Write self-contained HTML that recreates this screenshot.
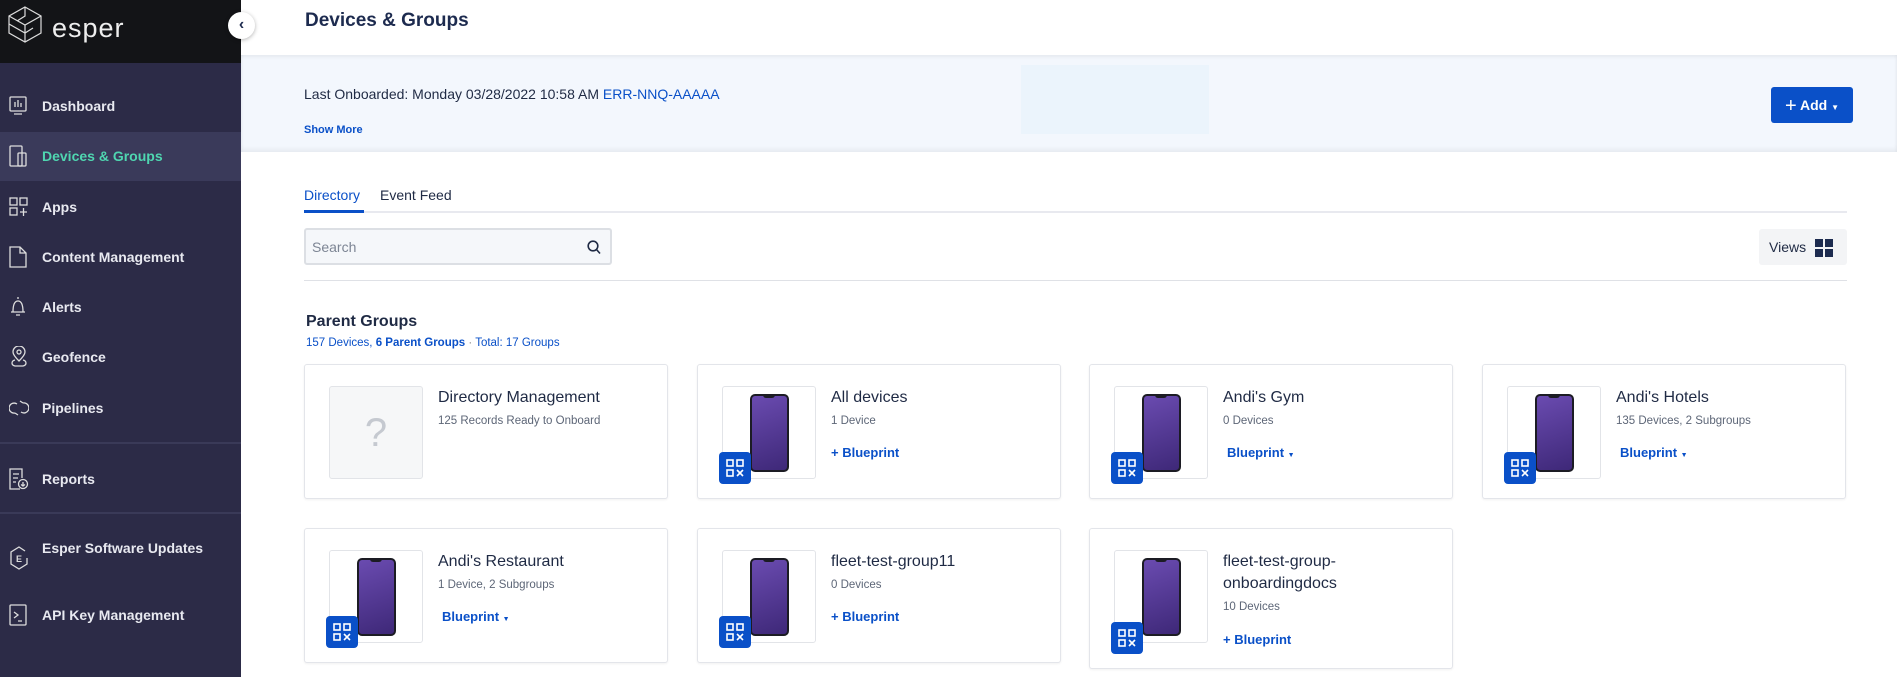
<!DOCTYPE html>
<html><head><meta charset="utf-8"><style>
*{box-sizing:border-box;margin:0;padding:0}
body{width:1897px;height:677px;overflow:hidden;font-family:"Liberation Sans",sans-serif;background:#fff;position:relative;color:#1f2a44}
.sb{position:absolute;left:0;top:0;width:241px;height:677px;background:#2c2b47}
.logo{position:absolute;left:0;top:0;width:241px;height:63px;background:#131417}
.nav{position:absolute;left:0;width:241px;color:#e8e9f0;font-size:14px;font-weight:bold}
.nav span{position:absolute;left:42px;transform:translateY(-50%)}
.nav svg{position:absolute;left:9px;transform:translateY(-50%)}
.abs{position:absolute}
.card{position:absolute;width:364px;height:135px;border:1px solid #e3e5ea;border-radius:3px;background:#fff;box-shadow:0 1px 2px rgba(0,0,0,.06)}
.img{position:absolute;left:24px;top:21px;width:94px;height:93px;border:1px solid #e2e4e8;border-radius:3px;background:#fff}
.phone{position:absolute;left:27px;top:7px;width:39px;height:78px;border-radius:5px;background:linear-gradient(160deg,#6a4bb0,#3e2878);border:2px solid #1c1c24}
.phone:after{content:"";position:absolute;left:11px;top:-1px;width:12px;height:3px;background:#1c1c24;border-radius:0 0 3px 3px}
.qr{position:absolute;left:21px;top:87px;width:32px;height:32px;background:#0a50c8;border-radius:4px}
.t{position:absolute;left:133px;top:22px;font-size:16px;color:#1f2a44;line-height:22px}
.s{position:absolute;left:133px;top:50px;font-size:11.5px;color:#5d6677}
.b{position:absolute;left:133px;top:80px;font-size:13px;font-weight:bold;color:#0a50c8}
</style></head><body>
<div class="sb"></div>
<div class="logo">
<svg class="abs" style="left:8px;top:6px" width="34" height="37" viewBox="0 0 34 37" fill="none" stroke="#ddd" stroke-width="1.2"><path d="M17 1L33 10V27L17 36L1 27V10Z"/><path d="M1 10L17 19L33 10M17 1V10L9 15M17 19V36M1 18L17 27L25 22"/></svg>
<div class="abs" style="left:52px;top:13px;font-size:27px;color:#eee;font-weight:300;letter-spacing:1px">esper</div>
</div>
<div class="abs" style="left:228px;top:12px;width:27px;height:27px;border-radius:50%;background:#fff;box-shadow:0 1px 4px rgba(0,0,0,.3);color:#1d2b4f;font-size:16px;font-weight:bold;text-align:center;line-height:26px">‹</div>

<div class="abs" style="left:0;top:132px;width:241px;height:49px;background:#3a3a5a"></div>
<div class="abs" style="left:0;top:442px;width:241px;height:2px;background:#3a3a58"></div>
<div class="abs" style="left:0;top:512px;width:241px;height:2px;background:#3a3a58"></div>

<div class="nav" style="top:106px"><svg width="18" height="20" viewBox="0 0 18 20" fill="none" stroke="#ddd" stroke-width="1.3"><rect x="1" y="1" width="16" height="14" rx="1"/><path d="M6 11V6M9 11V4M12 11V7M5 18H13"/></svg><span>Dashboard</span></div>
<div class="nav" style="top:156px;color:#4fd6b0"><svg width="18" height="22" viewBox="0 0 18 22" fill="none" stroke="#ddd" stroke-width="1.3"><rect x="1" y="1" width="12" height="20" rx="1"/><rect x="9" y="8" width="8" height="13" rx="1"/></svg><span>Devices &amp; Groups</span></div>
<div class="nav" style="top:207px"><svg width="20" height="20" viewBox="0 0 20 20" fill="none" stroke="#ddd" stroke-width="1.3"><rect x="1" y="1" width="7" height="7"/><rect x="11" y="1" width="7" height="7"/><rect x="1" y="11" width="7" height="7"/><path d="M14.5 11V19M11 15H18"/></svg><span>Apps</span></div>
<div class="nav" style="top:257px"><svg width="18" height="22" viewBox="0 0 18 22" fill="none" stroke="#ddd" stroke-width="1.3"><path d="M1 1H11L17 7V21H1Z M11 1V7H17"/></svg><span>Content Management</span></div>
<div class="nav" style="top:307px"><svg width="18" height="22" viewBox="0 0 18 22" fill="none" stroke="#ddd" stroke-width="1.3"><path d="M9 1V3M4 16C4 10 5 5 9 5C13 5 14 10 14 16H2H16M7 19H11"/></svg><span>Alerts</span></div>
<div class="nav" style="top:357px"><svg width="20" height="22" viewBox="0 0 20 22" fill="none" stroke="#ddd" stroke-width="1.3"><path d="M10 15C6 11 4 8 4 6A6 6 0 0 1 16 6C16 8 14 11 10 15Z"/><circle cx="10" cy="6" r="2"/><path d="M6 14C2 15 2 19 6 20H14C18 19 18 15 14 14"/></svg><span>Geofence</span></div>
<div class="nav" style="top:408px"><svg width="20" height="16" viewBox="0 0 20 16" fill="none" stroke="#ddd" stroke-width="1.3"><path d="M8 4A5 5 0 1 0 6 13M12 12A5 5 0 1 0 14 3M6 13L9 15M14 3L11 1"/></svg><span>Pipelines</span></div>
<div class="nav" style="top:479px"><svg width="20" height="22" viewBox="0 0 20 22" fill="none" stroke="#ddd" stroke-width="1.3"><path d="M11 21H1V1H13V10M4 6H10M4 10H9M4 14H7"/><circle cx="14" cy="16" r="4.5"/><path d="M14 14V18M12 16.5L14 18L16 16.5"/></svg><span>Reports</span></div>
<div class="nav" style="top:548px"><span style="top:0">Esper Software Updates</span></div>
<div class="nav" style="top:558px"><svg width="20" height="24" viewBox="0 0 20 24" fill="none" stroke="#ddd" stroke-width="1.3"><path d="M16 5L10 1L2 6V18L10 23L18 18V12"/><text x="7" y="16" fill="#ddd" stroke="none" font-size="9" font-family="Liberation Sans">E</text></svg></div>
<div class="nav" style="top:615px"><svg width="18" height="22" viewBox="0 0 18 22" fill="none" stroke="#ddd" stroke-width="1.3"><rect x="1" y="1" width="16" height="20" rx="1"/><path d="M5 8L9 11L5 14M9 17H13"/></svg><span>API Key Management</span></div>

<div class="abs" style="left:305px;top:10px;font-size:19px;font-weight:bold;color:#1d2b4f">Devices &amp; Groups</div>
<div class="abs" style="left:241px;top:55px;width:1656px;height:97px;background:#f3f7fd;box-shadow:inset 0 2px 3px rgba(0,0,0,.06),inset 0 -3px 4px rgba(0,0,0,.05)"></div>
<div class="abs" style="left:1021px;top:65px;width:188px;height:69px;background:#ebf4fc"></div>
<div class="abs" style="left:304px;top:86px;font-size:14px;color:#1f2a44">Last Onboarded: Monday 03/28/2022 10:58 AM <span style="color:#0a50c8">ERR-NNQ-AAAAA</span></div>
<div class="abs" style="left:304px;top:124px;font-size:11px;font-weight:bold;color:#0a50c8">Show More</div>
<div class="abs" style="left:1771px;top:87px;width:82px;height:36px;background:#0a50c8;border-radius:3px;color:#fff;font-size:14px;font-weight:bold;line-height:36px;text-align:center"><span style="font-weight:normal;font-size:20px;vertical-align:-2px">+</span> Add <span style="font-size:8px">▼</span></div>

<div class="abs" style="left:304px;top:187px;font-size:14px;color:#0a50c8">Directory</div>
<div class="abs" style="left:380px;top:187px;font-size:14px;color:#1f2a44">Event Feed</div>
<div class="abs" style="left:304px;top:211px;width:1543px;height:2px;background:#e8e9ef"></div>
<div class="abs" style="left:304px;top:210px;width:60px;height:3px;background:#0a50c8"></div>
<div class="abs" style="left:304px;top:228px;width:308px;height:37px;background:#f5f7fa;border:2px solid #dcdfe4;border-radius:3px"></div>
<div class="abs" style="left:312px;top:239px;font-size:14px;color:#7d8594">Search</div>
<svg class="abs" style="left:587px;top:240px" width="14" height="15" viewBox="0 0 14 15" fill="none" stroke="#1f2a44" stroke-width="1.6"><circle cx="6" cy="6" r="4.8"/><path d="M9.5 9.5L13 13.5"/></svg>
<div class="abs" style="left:1759px;top:229px;width:88px;height:36px;background:#f3f4f6;border-radius:3px"></div>
<div class="abs" style="left:1769px;top:239px;font-size:14px;color:#1f2a44">Views</div>
<svg class="abs" style="left:1815px;top:239px" width="18" height="18"><rect x="0" y="0" width="8" height="8" fill="#1d2b4f"/><rect x="10" y="0" width="8" height="8" fill="#1d2b4f"/><rect x="0" y="10" width="8" height="8" fill="#1d2b4f"/><rect x="10" y="10" width="8" height="8" fill="#1d2b4f"/></svg>
<div class="abs" style="left:304px;top:280px;width:1543px;height:1px;background:#dfe1e6"></div>

<div class="abs" style="left:306px;top:313px;font-size:16px;font-weight:bold;color:#1f2a44">Parent Groups</div>
<div class="abs" style="left:306px;top:337px;font-size:11.5px;color:#0a50c8">157 Devices, <b>6 Parent Groups</b> <span style="color:#888">·</span> Total: 17 Groups</div>

<div class="card" style="left:304px;top:364px"><div class="img" style="background:#f6f7f8;text-align:center;font-size:40px;color:#c5c9d0;line-height:92px">?</div><div class="t">Directory Management</div><div class="s">125 Records Ready to Onboard</div></div>

<div class="card" style="left:697px;top:364px"><div class="img"><div class="phone"></div></div><div class="qr"><svg width="32" height="32"><g fill="none" stroke="#fff" stroke-width="1.6"><rect x="8" y="8" width="6" height="6"/><rect x="18" y="8" width="6" height="6"/><rect x="8" y="18" width="6" height="6"/><path d="M18 18L24 24M24 18L18 24"/></g></svg></div><div class="t">All devices</div><div class="s">1 Device</div><div class="b">+ Blueprint</div></div>

<div class="card" style="left:1089px;top:364px"><div class="img"><div class="phone"></div></div><div class="qr"><svg width="32" height="32"><g fill="none" stroke="#fff" stroke-width="1.6"><rect x="8" y="8" width="6" height="6"/><rect x="18" y="8" width="6" height="6"/><rect x="8" y="18" width="6" height="6"/><path d="M18 18L24 24M24 18L18 24"/></g></svg></div><div class="t">Andi's Gym</div><div class="s">0 Devices</div><div class="b" style="left:137px">Blueprint <span style="font-size:7px">▼</span></div></div>

<div class="card" style="left:1482px;top:364px"><div class="img"><div class="phone"></div></div><div class="qr"><svg width="32" height="32"><g fill="none" stroke="#fff" stroke-width="1.6"><rect x="8" y="8" width="6" height="6"/><rect x="18" y="8" width="6" height="6"/><rect x="8" y="18" width="6" height="6"/><path d="M18 18L24 24M24 18L18 24"/></g></svg></div><div class="t">Andi's Hotels</div><div class="s">135 Devices, 2 Subgroups</div><div class="b" style="left:137px">Blueprint <span style="font-size:7px">▼</span></div></div>

<div class="card" style="left:304px;top:528px"><div class="img"><div class="phone"></div></div><div class="qr"><svg width="32" height="32"><g fill="none" stroke="#fff" stroke-width="1.6"><rect x="8" y="8" width="6" height="6"/><rect x="18" y="8" width="6" height="6"/><rect x="8" y="18" width="6" height="6"/><path d="M18 18L24 24M24 18L18 24"/></g></svg></div><div class="t">Andi's Restaurant</div><div class="s">1 Device, 2 Subgroups</div><div class="b" style="left:137px">Blueprint <span style="font-size:7px">▼</span></div></div>

<div class="card" style="left:697px;top:528px"><div class="img"><div class="phone"></div></div><div class="qr"><svg width="32" height="32"><g fill="none" stroke="#fff" stroke-width="1.6"><rect x="8" y="8" width="6" height="6"/><rect x="18" y="8" width="6" height="6"/><rect x="8" y="18" width="6" height="6"/><path d="M18 18L24 24M24 18L18 24"/></g></svg></div><div class="t">fleet-test-group11</div><div class="s">0 Devices</div><div class="b">+ Blueprint</div></div>

<div class="card" style="left:1089px;top:528px;height:141px"><div class="img"><div class="phone"></div></div><div class="qr" style="top:93px"><svg width="32" height="32"><g fill="none" stroke="#fff" stroke-width="1.6"><rect x="8" y="8" width="6" height="6"/><rect x="18" y="8" width="6" height="6"/><rect x="8" y="18" width="6" height="6"/><path d="M18 18L24 24M24 18L18 24"/></g></svg></div><div class="t">fleet-test-group-<br>onboardingdocs</div><div class="s" style="top:72px">10 Devices</div><div class="b" style="top:103px">+ Blueprint</div></div>
</body></html>
